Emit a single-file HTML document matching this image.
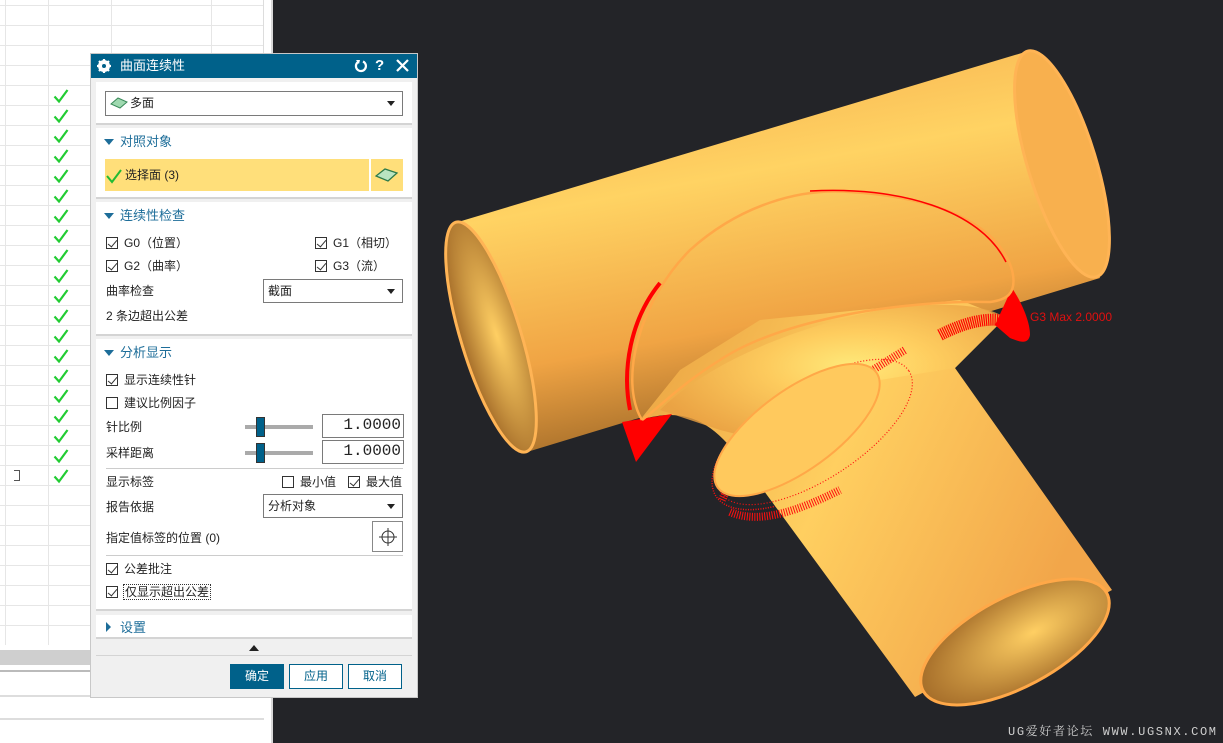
<!DOCTYPE html>
<html><head><meta charset="utf-8"><style>
*{margin:0;padding:0;box-sizing:border-box}
body{width:1223px;height:743px;overflow:hidden;background:#232428;font-family:"Liberation Sans","Noto Sans CJK SC",sans-serif;font-size:12px;color:#222;position:relative}
.abs{position:absolute}
#left{left:0;top:0;width:273px;height:743px;background:#fff;border-right:2px solid #d8d8d8}
.hl{position:absolute;left:0;width:263px;height:1px;background:#e6e6e6}
.vl{position:absolute;top:0;width:1px;height:645px;background:#e6e6e6}
.chk{position:absolute;left:53px;width:16px;height:16px}
#dlg{left:90px;top:53px;width:328px;height:645px;background:#f0f0f0;border:1px solid #c8c8c8}
#title{left:0;top:0;width:326px;height:24px;background:#00618a;color:#fff;font-size:13px}
.panel{position:absolute;left:5px;width:316px;background:#fff;border-bottom:2px solid #d4d4d4}
.hdr{position:absolute;left:24px;color:#1d6d99;font-size:13px;line-height:15px}
.tri{position:absolute;left:8px;width:0;height:0;border-left:5px solid transparent;border-right:5px solid transparent;border-top:6px solid #1d6d99}
.t{position:absolute;white-space:nowrap;font-size:12px;line-height:14px}
.cb{position:absolute;width:12px;height:12px;border:1px solid #333;background:#fff}
.cb.on::after{content:"";position:absolute;left:3px;top:0px;width:4px;height:8px;border-right:1px solid #333;border-bottom:1px solid #333;transform:rotate(40deg)}
.sel{position:absolute;border:1px solid #7a7a7a;background:#fff}
.sel::after{content:"";position:absolute;right:7px;top:9px;border-left:4px solid transparent;border-right:4px solid transparent;border-top:5px solid #222}
.inp{position:absolute;border:1px solid #7a7a7a;background:#fff;font-family:"Liberation Mono","Noto Sans CJK SC",monospace;font-size:16px;text-align:right;padding-right:2px;line-height:21px}
.slider{position:absolute;width:68px;height:4px;background:#aaa}
.knob{position:absolute;width:9px;height:20px;background:#00618a;border:1px solid #333}
.btn{position:absolute;top:610px;width:54px;height:25px;border:1px solid #00618a;background:#fff;color:#00618a;text-align:center;line-height:23px;font-size:12px}
</style></head><body>
<svg width="0" height="0" style="position:absolute"><defs><symbol id="ck" viewBox="0 0 16 16"><path d="M1.5,8.5 L6,13.5 L14.5,2" fill="none" stroke="#22cc33" stroke-width="2.2"/></symbol></defs></svg>
<div id="left" class="abs">
<div class="hl" style="top:5px"></div><div class="hl" style="top:25px"></div><div class="hl" style="top:45px"></div><div class="hl" style="top:65px"></div><div class="hl" style="top:85px"></div><div class="hl" style="top:105px"></div><div class="hl" style="top:125px"></div><div class="hl" style="top:145px"></div><div class="hl" style="top:165px"></div><div class="hl" style="top:185px"></div><div class="hl" style="top:205px"></div><div class="hl" style="top:225px"></div><div class="hl" style="top:245px"></div><div class="hl" style="top:265px"></div><div class="hl" style="top:285px"></div><div class="hl" style="top:305px"></div><div class="hl" style="top:325px"></div><div class="hl" style="top:345px"></div><div class="hl" style="top:365px"></div><div class="hl" style="top:385px"></div><div class="hl" style="top:405px"></div><div class="hl" style="top:425px"></div><div class="hl" style="top:445px"></div><div class="hl" style="top:465px"></div><div class="hl" style="top:485px"></div><div class="hl" style="top:505px"></div><div class="hl" style="top:525px"></div><div class="hl" style="top:545px"></div><div class="hl" style="top:565px"></div><div class="hl" style="top:585px"></div><div class="hl" style="top:605px"></div><div class="hl" style="top:625px"></div>
<div class="vl" style="left:5px"></div><div class="vl" style="left:48px"></div><div class="vl" style="left:111px"></div><div class="vl" style="left:211px"></div><div class="vl" style="left:263px;background:#ddd"></div>
<svg class="chk" style="top:88px"><use href="#ck"/></svg><svg class="chk" style="top:108px"><use href="#ck"/></svg><svg class="chk" style="top:128px"><use href="#ck"/></svg><svg class="chk" style="top:148px"><use href="#ck"/></svg><svg class="chk" style="top:168px"><use href="#ck"/></svg><svg class="chk" style="top:188px"><use href="#ck"/></svg><svg class="chk" style="top:208px"><use href="#ck"/></svg><svg class="chk" style="top:228px"><use href="#ck"/></svg><svg class="chk" style="top:248px"><use href="#ck"/></svg><svg class="chk" style="top:268px"><use href="#ck"/></svg><svg class="chk" style="top:288px"><use href="#ck"/></svg><svg class="chk" style="top:308px"><use href="#ck"/></svg><svg class="chk" style="top:328px"><use href="#ck"/></svg><svg class="chk" style="top:348px"><use href="#ck"/></svg><svg class="chk" style="top:368px"><use href="#ck"/></svg><svg class="chk" style="top:388px"><use href="#ck"/></svg><svg class="chk" style="top:408px"><use href="#ck"/></svg><svg class="chk" style="top:428px"><use href="#ck"/></svg><svg class="chk" style="top:448px"><use href="#ck"/></svg><svg class="chk" style="top:468px"><use href="#ck"/></svg>
<div class="abs" style="left:14px;top:470px;width:6px;height:11px;border:1px solid #555;border-left:none"></div>
<div class="abs" style="left:0;top:650px;width:271px;height:15px;background:#cfcfcf"></div>
<div class="abs" style="left:0;top:670px;width:271px;height:2px;background:#bbb"></div>
<div class="abs" style="left:0;top:695px;width:271px;height:2px;background:#ddd"></div>
<div class="abs" style="left:0;top:718px;width:264px;height:2px;background:#ddd"></div>
</div>

<svg class="abs" style="left:0;top:0" width="1223" height="743">
<defs>
<linearGradient id="mg" x1="0" y1="0" x2="0.3" y2="1"><stop offset="0" stop-color="#f4a64a"/><stop offset="0.4" stop-color="#ffd363"/><stop offset="0.75" stop-color="#f0a444"/><stop offset="1" stop-color="#a06a28"/></linearGradient>
<linearGradient id="bg" x1="0" y1="0" x2="1" y2="0.4"><stop offset="0" stop-color="#e9a040"/><stop offset="0.5" stop-color="#ffcf60"/><stop offset="1" stop-color="#f2a64a"/></linearGradient>
<radialGradient id="in" cx="0.6" cy="0.5" r="0.6"><stop offset="0" stop-color="#ffcf63"/><stop offset="1" stop-color="#a66e2a"/></radialGradient>
<radialGradient id="sd" cx="0.55" cy="0.45" r="0.6"><stop offset="0" stop-color="#fff080"/><stop offset="0.4" stop-color="#ffcf60"/><stop offset="1" stop-color="#e9a042"/></radialGradient>
</defs>
<!-- main tube -->
<polygon points="458,222 1025,52 1100,278 527,452" fill="url(#mg)"/>
<ellipse cx="1062" cy="164" rx="34" ry="118" transform="rotate(-17 1062 164)" fill="#f8b04e" stroke="#ffb455" stroke-width="3"/>
<!-- red ring back part -->
<ellipse cx="815" cy="432" rx="118" ry="52" transform="rotate(-33 815 432)" fill="none" stroke="#ff1010" stroke-width="1.5" stroke-dasharray="1 1.5"/>
<!-- branch + blend -->
<path d="M640,420 C690,405 715,425 745,465 L915,697 L1112,590 L955,368 L1005,318 L960,300 L760,320 L680,370 Z" fill="url(#bg)"/>
<path d="M660,410 C700,370 780,330 880,310 C940,300 990,305 1005,318 L955,368 L880,380 L760,440 L720,430 Z" fill="url(#sd)" opacity="0.8"/>
<ellipse cx="1015" cy="642" rx="104" ry="45" transform="rotate(-28 1015 642)" fill="url(#in)" stroke="#ffa848" stroke-width="3"/>
<!-- left end -->
<ellipse cx="491" cy="337" rx="30" ry="120" transform="rotate(-17 491 337)" fill="url(#in)" stroke="#ffb455" stroke-width="3"/>
<!-- red continuity -->
<ellipse cx="815" cy="432" rx="112" ry="47" transform="rotate(-33 815 432)" fill="none" stroke="#ff1010" stroke-width="1.2" stroke-dasharray="1 2"/>
<path d="M722,500 C735,470 790,420 905,350" stroke="#ff1010" stroke-width="8" fill="none" stroke-dasharray="1 1.5"/>
<path d="M730,512 C760,525 800,510 840,490" stroke="#ff1010" stroke-width="8" fill="none" stroke-dasharray="1 1.5"/>
<ellipse cx="797" cy="430" rx="98" ry="40" transform="rotate(-36 797 430)" fill="#ffc95d" stroke="#ffa848" stroke-width="2"/>
<path d="M622,422 L636,462 L672,414 Z" fill="#ff0000"/>
<path d="M1012,288 C1020,300 1030,320 1030,335 C1028,345 1020,342 1010,338 L995,325 Z" fill="#ff0000"/>
<path d="M940,335 C965,322 990,316 1010,322" stroke="#ff0000" stroke-width="12" fill="none" stroke-dasharray="1.2 1"/>
<path d="M642,420 C618,380 640,300 690,250 C740,205 800,188 850,192 C950,198 1000,230 1012,270 C1018,295 1005,300 990,302 C900,300 780,320 720,360 C680,385 662,405 642,420" fill="none" stroke="#ffa848" stroke-width="2.5"/>
<path d="M630,410 C622,370 630,320 660,283" stroke="#ff0000" stroke-width="4" fill="none"/>
<path d="M810,191 C900,186 980,210 1006,262" stroke="#ff0000" stroke-width="1.5" fill="none"/>
<text x="1030" y="321" fill="#e01010" font-family="Liberation Sans, sans-serif" font-size="12">G3 Max 2.0000</text>
<text x="1008" y="735" fill="#cfcfcf" font-family="Liberation Mono, 'Noto Serif CJK SC', monospace" font-size="12" textLength="208">UG爱好者论坛 WWW.UGSNX.COM</text>
</svg>

<div id="dlg" class="abs">
<div id="title" class="abs">
<svg class="abs" style="left:6px;top:5px" width="14" height="14" viewBox="0 0 14 14"><circle cx="7" cy="7" r="4.5" fill="none" stroke="#fff" stroke-width="3"/><path d="M7,0V14M0,7H14M2,2L12,12M12,2L2,12" stroke="#fff" stroke-width="2.2"/><circle cx="7" cy="7" r="2" fill="#00618a"/></svg>
<span class="abs" style="left:29px;top:4px;line-height:16px">曲面连续性</span>
<svg class="abs" style="left:263px;top:5px" width="14" height="14"><path d="M4,3 A5,5 0 1 0 9,2.5" fill="none" stroke="#fff" stroke-width="2.2"/><path d="M2,1 L6,1 L5,5Z" fill="#fff"/></svg>
<span class="abs" style="left:284px;top:3px;font-size:15px;font-weight:bold;line-height:17px">?</span>
<svg class="abs" style="left:305px;top:5px" width="13" height="13"><path d="M1,1L12,12M12,1L1,12" stroke="#fff" stroke-width="2.2"/></svg>
</div>
<div class="panel" style="top:28px;height:43px">
<div class="sel" style="left:9px;top:9px;width:298px;height:25px">
<svg class="abs" style="left:4px;top:5px" width="18" height="12"><path d="M1,7 L8,1 L17,5 L10,11 Z" fill="#9fd9b0" stroke="#3a8a5a"/></svg>
<span class="t" style="left:24px;top:4px">多面</span></div>
</div>
<div class="panel" style="top:74px;height:71px">
<div class="tri" style="top:11px"></div><span class="hdr" style="top:6px">对照对象</span>
<div class="abs" style="left:9px;top:31px;width:264px;height:32px;background:#ffdf7a"></div>
<svg class="abs" style="left:10px;top:40px" width="16" height="16"><path d="M1,8 L6,14 L15,2" fill="none" stroke="#22bb33" stroke-width="2"/></svg>
<span class="t" style="left:29px;top:40px">选择面 (3)</span>
<div class="abs" style="left:275px;top:31px;width:32px;height:32px;background:#ffdf7a"><svg class="abs" style="left:4px;top:8px" width="24" height="16"><path d="M1,9 L10,2 L22,6 L13,14 Z" fill="#b9e4c1" stroke="#2d7a4a" stroke-width="1.3"/></svg></div>
</div>
<div class="panel" style="top:148px;height:134px">
<div class="tri" style="top:11px"></div><span class="hdr" style="top:6px">连续性检查</span>
<div class="cb on" style="left:10px;top:35px"></div><span class="t" style="left:28px;top:34px">G0（位置）</span>
<div class="cb on" style="left:219px;top:35px"></div><span class="t" style="left:237px;top:34px">G1（相切）</span>
<div class="cb on" style="left:10px;top:58px"></div><span class="t" style="left:28px;top:57px">G2（曲率）</span>
<div class="cb on" style="left:219px;top:58px"></div><span class="t" style="left:237px;top:57px">G3（流）</span>
<span class="t" style="left:10px;top:82px">曲率检查</span>
<div class="sel" style="left:167px;top:77px;width:140px;height:24px"><span class="t" style="left:4px;top:4px">截面</span></div>
<span class="t" style="left:10px;top:107px">2 条边超出公差</span>
</div>
<div class="panel" style="top:285px;height:272px">
<div class="tri" style="top:11px"></div><span class="hdr" style="top:6px">分析显示</span>
<div class="cb on" style="left:10px;top:35px"></div><span class="t" style="left:28px;top:34px">显示连续性针</span>
<div class="cb" style="left:10px;top:58px"></div><span class="t" style="left:28px;top:57px">建议比例因子</span>
<span class="t" style="left:10px;top:81px">针比例</span>
<div class="slider" style="left:149px;top:86px"></div><div class="knob" style="left:160px;top:78px"></div>
<div class="inp" style="left:226px;top:75px;width:82px;height:24px">1.0000</div>
<span class="t" style="left:10px;top:107px">采样距离</span>
<div class="slider" style="left:149px;top:112px"></div><div class="knob" style="left:160px;top:104px"></div>
<div class="inp" style="left:226px;top:101px;width:82px;height:24px">1.0000</div>
<div class="abs" style="left:10px;top:129px;width:297px;height:1px;background:#ccc"></div>
<span class="t" style="left:10px;top:136px">显示标签</span>
<div class="cb" style="left:186px;top:137px"></div><span class="t" style="left:204px;top:136px">最小值</span>
<div class="cb on" style="left:252px;top:137px"></div><span class="t" style="left:270px;top:136px">最大值</span>
<span class="t" style="left:10px;top:161px">报告依据</span>
<div class="sel" style="left:167px;top:155px;width:140px;height:24px"><span class="t" style="left:4px;top:4px">分析对象</span></div>
<span class="t" style="left:10px;top:192px">指定值标签的位置 (0)</span>
<div class="abs" style="left:276px;top:182px;width:31px;height:31px;border:1px solid #888;background:#fff"><svg class="abs" style="left:5px;top:5px" width="20" height="20"><circle cx="10" cy="10" r="6" fill="none" stroke="#333"/><path d="M10,1V19M1,10H19" stroke="#333"/></svg></div>
<div class="abs" style="left:10px;top:216px;width:297px;height:1px;background:#ccc"></div>
<div class="cb on" style="left:10px;top:224px"></div><span class="t" style="left:28px;top:223px">公差批注</span>
<div class="cb on" style="left:10px;top:247px"></div><span class="t" style="left:27px;top:245px;border:1px dotted #333;padding:0 1px">仅显示超出公差</span>
</div>
<div class="panel" style="top:561px;height:24px">
<div class="abs" style="left:10px;top:7px;border-top:5px solid transparent;border-bottom:5px solid transparent;border-left:5px solid #1d6d99"></div>
<span class="hdr" style="top:5px">设置</span>
</div>
<div class="abs" style="left:158px;top:591px;border-left:5px solid transparent;border-right:5px solid transparent;border-bottom:6px solid #222"></div>
<div class="abs" style="left:5px;top:601px;width:316px;height:1px;background:#d4d4d4"></div>
<div class="btn" style="left:139px;background:#00618a;color:#fff">确定</div>
<div class="btn" style="left:198px">应用</div>
<div class="btn" style="left:257px">取消</div>
</div>
</body></html>
